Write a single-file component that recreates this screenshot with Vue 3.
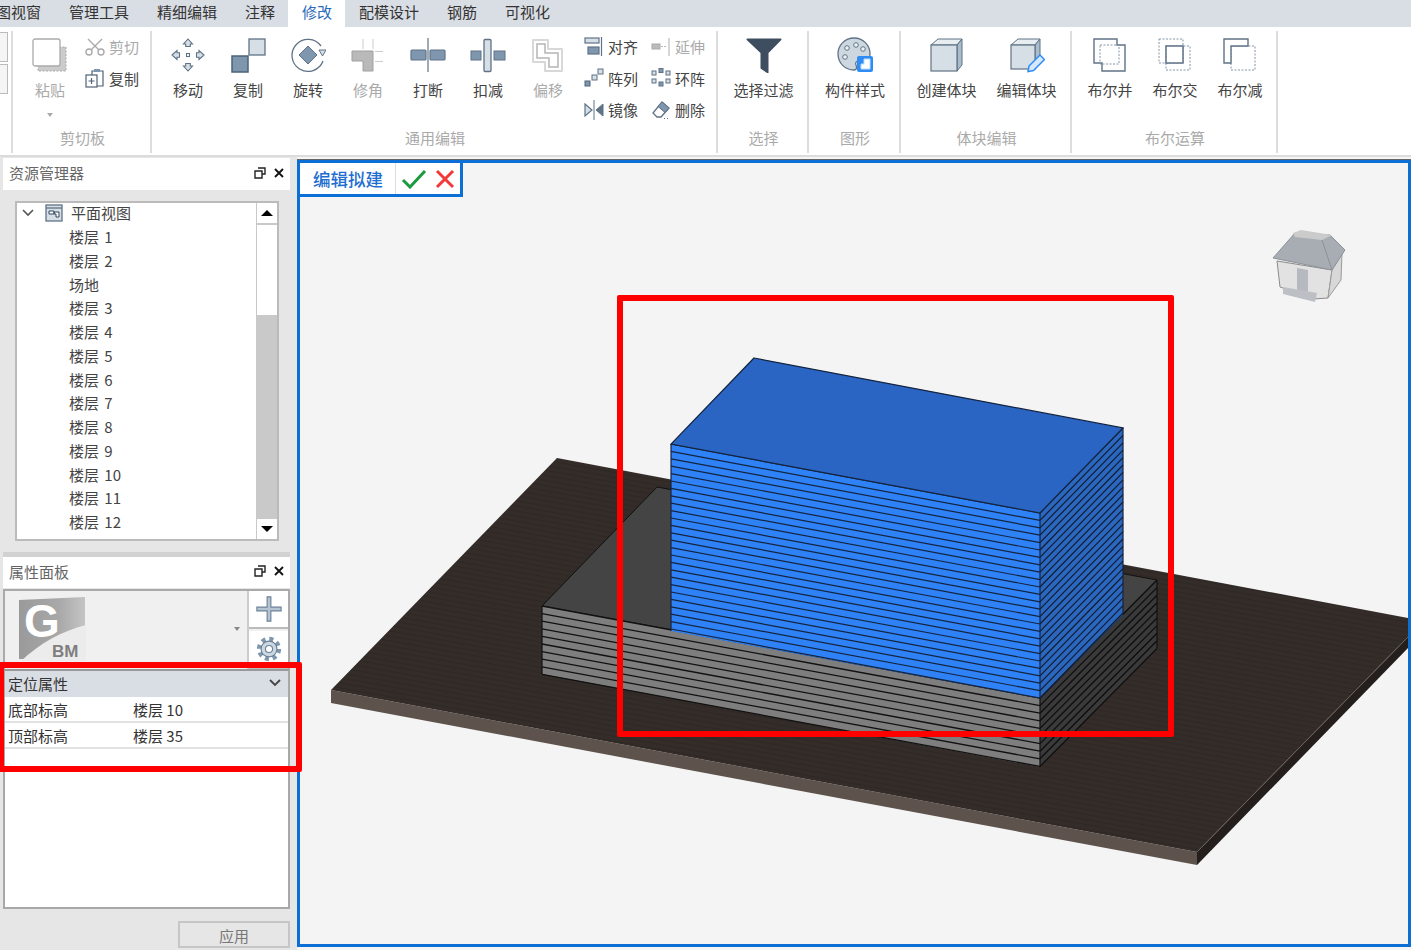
<template>
  <div class="app">
    <div class="tabs">
      <div v-for="t in tabs" :key="t" class="tab" :class="{ active: t === '修改' }">{{ t }}</div>
    </div>

    <div class="ribbon">
      <div class="stub"><i></i><i></i></div>

      <section class="group clip">
        <div class="tools">
          <div class="paste off">
            <svg class="icon" viewBox="0 0 36 36" v-html="icons.paste"></svg>
            <span class="label">粘贴</span>
            <b class="caret"></b>
          </div>
          <div class="small-col">
            <div class="small off">
              <svg viewBox="0 0 20 20" v-html="icons.cut"></svg><span>剪切</span>
            </div>
            <div class="small">
              <svg viewBox="0 0 20 20" v-html="icons.copySmall"></svg><span>复制</span>
            </div>
          </div>
        </div>
        <div class="group-label">剪切板</div>
      </section>

      <section class="group edit">
        <div class="tools">
          <div v-for="t in editTools" :key="t.name" class="tool w60" :class="{ off: t.off }">
            <svg class="icon" viewBox="0 0 36 36" v-html="icons[t.icon]"></svg>
            <span class="label">{{ t.name }}</span>
          </div>
          <div class="small-grid">
            <div v-for="t in smallTools" :key="t.name" class="small" :class="{ off: t.off }">
              <svg viewBox="0 0 20 20" v-html="icons[t.icon]"></svg><span>{{ t.name }}</span>
            </div>
          </div>
        </div>
        <div class="group-label">通用编辑</div>
      </section>

      <section class="group sel">
        <div class="tools center">
          <div class="tool w60">
            <svg class="icon" viewBox="0 0 36 36" v-html="icons.filter"></svg>
            <span class="label">选择过滤</span>
          </div>
        </div>
        <div class="group-label">选择</div>
      </section>

      <section class="group shape">
        <div class="tools center">
          <div class="tool w60">
            <svg class="icon" viewBox="0 0 36 36" v-html="icons.palette"></svg>
            <span class="label">构件样式</span>
          </div>
        </div>
        <div class="group-label">图形</div>
      </section>

      <section class="group block">
        <div class="tools center">
          <div class="tool w80">
            <svg class="icon" viewBox="0 0 36 36" v-html="icons.cube"></svg>
            <span class="label">创建体块</span>
          </div>
          <div class="tool w80">
            <svg class="icon" viewBox="0 0 36 36" v-html="icons.cubeEdit"></svg>
            <span class="label">编辑体块</span>
          </div>
        </div>
        <div class="group-label">体块编辑</div>
      </section>

      <section class="group bool">
        <div class="tools center">
          <div v-for="t in boolTools" :key="t.name" class="tool w65">
            <svg class="icon" viewBox="0 0 36 36" v-html="icons[t.icon]"></svg>
            <span class="label">{{ t.name }}</span>
          </div>
        </div>
        <div class="group-label">布尔运算</div>
      </section>
    </div>

    <div class="workspace">
      <aside class="side">
        <div class="panel-head first">
          <span>资源管理器</span>
          <div class="head-btns">
            <svg viewBox="0 0 12 12" v-html="icons.restore"></svg>
            <svg viewBox="0 0 12 12" v-html="icons.close"></svg>
          </div>
        </div>
        <div class="tree-wrap">
          <div class="tree">
            <div class="tree-list">
              <div class="tree-root">
                <svg class="chev" viewBox="0 0 12 8"><path d="M1 1l5 5 5-5" fill="none" stroke="#555" stroke-width="1.6" /></svg>
                <svg class="view-ico" viewBox="0 0 18 18" v-html="icons.planView"></svg>
                <span>平面视图</span>
              </div>
              <div v-for="f in floors" :key="f" class="tree-row">{{ f }}</div>
            </div>
            <div class="scroll">
              <div class="sc-btn"><b class="up"></b></div>
              <div class="sc-thumb"></div>
              <div class="sc-track"></div>
              <div class="sc-btn"><b class="down"></b></div>
            </div>
          </div>
        </div>
        <div class="divider"></div>

        <div class="panel-head">
          <span>属性面板</span>
          <div class="head-btns">
            <svg viewBox="0 0 12 12" v-html="icons.restore"></svg>
            <svg viewBox="0 0 12 12" v-html="icons.close"></svg>
          </div>
        </div>
        <div class="selector">
          <div class="type-box">
            <svg class="logo" viewBox="0 0 68 66">
              <defs>
                <linearGradient id="logoFill" x1="0" y1="0" x2="1" y2="0">
                  <stop offset="0" stop-color="#9a9a9a" />
                  <stop offset="0.6" stop-color="#a8a8a8" />
                  <stop offset="1" stop-color="#c4c4c4" />
                </linearGradient>
              </defs>
              <path d="M1 5L67 2V64H1z" fill="url(#logoFill)" />
              <path d="M3 66C22 48 44 36 68 30V66z" fill="#ececec" />
              <text x="6" y="42" class="logo-g">G</text>
              <text x="34" y="62" class="logo-bm">BM</text>
            </svg>
            <b class="caret"></b>
          </div>
          <div class="type-btns">
            <div class="type-btn">
              <svg viewBox="0 0 30 30"><path d="M13 2h4v11h11v4H17v11h-4V17H2v-4h11z" fill="#b4c4d3" stroke="#6b8096" stroke-width="1.2" /></svg>
            </div>
            <div class="type-btn">
              <svg viewBox="0 0 30 30" v-html="icons.gear"></svg>
            </div>
          </div>
        </div>
        <div class="props">
          <div class="props-head">
            <span>定位属性</span>
            <svg viewBox="0 0 12 8"><path d="M1 1l5 5 5-5" fill="none" stroke="#444" stroke-width="1.8" /></svg>
          </div>
          <div v-for="p in props" :key="p.k" class="prop-row">
            <span class="prop-k">{{ p.k }}</span>
            <span>{{ p.v }}</span>
          </div>
        </div>
        <div class="apply-row">
          <div class="apply">应用</div>
        </div>
      </aside>

      <main class="viewport">
        <svg class="scene" viewBox="300 163 1108 781">
          <defs>
            <pattern id="grain" width="14" height="5" patternUnits="userSpaceOnUse" patternTransform="rotate(10)">
              <rect width="14" height="5" fill="#332c29" />
              <rect y="3" width="14" height="1" fill="#2e2825" />
            </pattern>
          </defs>

          <!-- site plate -->
          <polygon points="331,690 1197,852 1197,865 331,703" fill="#5d524c" />
          <polygon points="1197,852 1408,637 1408,648 1197,865" fill="#241f1c" />
          <polygon points="557,458 1408,618 1408,637 1197,852 331,690" fill="url(#grain)" />
          <line x1="1197" y1="852" x2="1408" y2="637" stroke="#6a645f" stroke-width="1" />

          <!-- podium floors -->
          <polygon points="542,606 657,487 1157,580 1040,698" fill="#444" stroke="#111" stroke-width="1" />
          <polygon points="542,606 1040,698 1040,767 542,674" fill="#7e7e7e" />
          <polygon points="1040,698 1157,580 1157,648 1040,767" fill="#3a3a3a" />
          <line v-for="(l, i) in podiumFront" :key="'pf' + i" v-bind="l" stroke="#111" stroke-width="1.3" />
          <line v-for="(l, i) in podiumSide" :key="'ps' + i" v-bind="l" stroke="#0d0d0d" stroke-width="1.3" />
          <path d="M542 606V674M1040 698V767M1157 580V648" stroke="#111" stroke-width="1.2" />

          <!-- selected tower -->
          <polygon points="671,444 1040,513 1040,698 671,631" fill="#2f82f6" />
          <polygon points="1040,513 1123,428 1123,615 1040,698" fill="#2b67bf" />
          <line v-for="(l, i) in towerFront" :key="'tf' + i" v-bind="l" stroke="#14243f" stroke-width="1.2" />
          <line v-for="(l, i) in towerSide" :key="'ts' + i" v-bind="l" stroke="#101c30" stroke-width="1.2" />
          <polygon points="754,358 1123,428 1040,513 671,444" fill="#2a65c4" stroke="#14243f" stroke-width="1.2" />
          <path d="M671 444V631M1040 513V698M1123 428V615" stroke="#14243f" stroke-width="1.2" />

          <!-- view cube -->
          <g stroke-linejoin="round">
            <polygon points="1277,261 1332,270 1328,298 1313,299 1280,287" fill="#e2e2e2" stroke="#8b8b8b" />
            <polygon points="1332,270 1342,253 1341,280 1328,298" fill="#d8d8d8" stroke="#9a9a9a" />
            <polygon points="1297,268 1308,270 1308,293 1297,290" fill="#b6bac0" />
            <polygon points="1283,287 1317,293 1315,302 1283,294" fill="#bcc0c4" />
            <polygon points="1273,258 1295,233 1330,235 1345,250 1332,270" fill="#a8adb3" stroke="#8d9197" />
            <path d="M1322 240L1332 270" stroke="#8d9197" fill="none" />
            <polygon points="1293,233 1301,230 1332,235 1322,240 1295,237" fill="#cbcbcb" />
          </g>
        </svg>

        <div class="edit-bar">
          <span class="edit-title">编辑拟建</span>
          <div class="edit-acts">
            <svg viewBox="0 0 26 20"><path d="M2 11l7 7L24 2" fill="none" stroke="#1c9a3e" stroke-width="3" /></svg>
            <svg viewBox="0 0 20 20"><path d="M2 2l16 16M18 2L2 18" fill="none" stroke="#f03a3a" stroke-width="3" /></svg>
          </div>
        </div>
      </main>
    </div>

    <!-- red annotations on the screenshot -->
    <div class="mark mark-model"></div>
    <div class="mark mark-props"></div>
  </div>
</template>

<script setup>
const S = '#5f7286'
const F = '#7f97ae'
const L = '#d6dfe6'
const DASH = '#8496a8'

const tabs = ['图视窗', '管理工具', '精细编辑', '注释', '修改', '配模设计', '钢筋', '可视化']

const editTools = [
  { name: '移动', icon: 'move' },
  { name: '复制', icon: 'copy' },
  { name: '旋转', icon: 'rotate' },
  { name: '修角', icon: 'trim', off: true },
  { name: '打断', icon: 'split' },
  { name: '扣减', icon: 'subtract' },
  { name: '偏移', icon: 'offset', off: true }
]

const smallTools = [
  { name: '对齐', icon: 'align' },
  { name: '延伸', icon: 'extend', off: true },
  { name: '阵列', icon: 'array' },
  { name: '环阵', icon: 'ring' },
  { name: '镜像', icon: 'mirror' },
  { name: '删除', icon: 'erase' }
]

const boolTools = [
  { name: '布尔并', icon: 'boolUnion' },
  { name: '布尔交', icon: 'boolCross' },
  { name: '布尔减', icon: 'boolMinus' }
]

const floors = ['楼层 1', '楼层 2', '场地']
for (let i = 3; i <= 12; i++) floors.push('楼层 ' + i)

const props = [
  { k: '底部标高', v: '楼层 10' },
  { k: '顶部标高', v: '楼层 35' }
]

// floor lines of the two volumes, one per storey
function floorLines(x1, y1, x2, y2, step, count) {
  const out = []
  for (let i = 0; i <= count; i++) {
    out.push({ x1, y1: y1 + i * step, x2, y2: y2 + i * step })
  }
  return out
}

const podiumFront = floorLines(542, 606, 1040, 698, 7.6, 9)
const podiumSide = floorLines(1040, 698, 1157, 580, 7.6, 9)
const towerFront = floorLines(671, 444, 1040, 513, 7.4, 25)
const towerSide = floorLines(1040, 513, 1123, 428, 7.4, 25)

const arrow = 'M18 2l4.5 5h-2.2v2.5h-4.6V7h-2.2z'

const icons = {
  paste: `<path d="M6 10h28v24H6z" fill="#ccc" stroke="#aaa" stroke-dasharray="2 1.5"/><rect x="1" y="2" width="27" height="27" rx="2" fill="#fff" stroke="#aaa" stroke-width="1.3"/>`,
  move: `<g fill="${L}" stroke="${S}" stroke-width="1.1"><path d="${arrow}"/><path d="${arrow}" transform="rotate(90 18 18)"/><path d="${arrow}" transform="rotate(180 18 18)"/><path d="${arrow}" transform="rotate(270 18 18)"/><rect x="16.5" y="16.5" width="3" height="3" fill="#fff"/></g>`,
  copy: `<rect x="19" y="2" width="16" height="16" fill="${L}" stroke="${S}" stroke-width="1.3"/><rect x="2" y="19" width="16" height="16" fill="${F}" stroke="#4f6276" stroke-width="1.5"/>`,
  rotate: `<path d="M31 9A16 16 0 1 0 33 24" fill="none" stroke="${S}" stroke-width="1.3"/><path d="M18 9l9 9-9 9-9-9z" fill="${F}" stroke="${S}"/><path d="M29 13h7l-3.500 6z" fill="${L}" stroke="${S}"/>`,
  trim: `<path d="M2 14H23V34H13V24H2z" fill="#b9b9b9" stroke="#a0a0a0"/><path d="M13 2v10M23 2v10M25 14.500h8M25 24.500h8" stroke="#ccc" fill="none"/>`,
  split: `<path d="M18 1v34" stroke="${S}" stroke-width="1.2"/><rect x="1" y="13" width="15" height="10" rx="1" fill="${F}" stroke="${S}" stroke-width="1.2"/><rect x="20" y="13" width="15" height="10" rx="1" fill="${F}" stroke="${S}" stroke-width="1.2"/>`,
  subtract: `<rect x="1" y="14" width="10" height="9" fill="${F}" stroke="${S}"/><rect x="24" y="14" width="11" height="9" fill="${F}" stroke="${S}"/><rect x="14" y="2.500" width="7" height="32" rx="1" fill="${L}" stroke="${S}" stroke-width="1.3"/>`,
  offset: `<path d="M3 3h15v9h14v22H15v-9H3z" fill="#fff" stroke="#d8d8d8" stroke-width="2" stroke-linejoin="round"/><path d="M7 7h8v9h13v14H19v-9H7z" fill="none" stroke="#b5b5b5" stroke-width="1.5"/>`,
  cut: `<g fill="none" stroke="#aaa" stroke-width="1.4"><circle cx="4" cy="15" r="3"/><circle cx="16" cy="15" r="3"/><path d="M3 2l11 11M17 2L6 13"/></g>`,
  copySmall: `<path d="M7 3h11v15H7z" fill="#fff" stroke="#4f6276" stroke-width="1.2"/><rect x="9" y="1" width="6" height="3" fill="${F}"/><rect x="1" y="7" width="11" height="12" fill="#fff" stroke="#4f6276" stroke-width="1.2"/><path d="M6.500 10v6M3.500 13h6" stroke="#4f6276" stroke-width="1.2"/>`,
  align: `<rect x="1" y="1" width="14" height="5" fill="${L}" stroke="${S}" stroke-width="1.2"/><rect x="4" y="10" width="11" height="7" fill="${F}" stroke="${S}" stroke-width="1.2"/><path d="M17.500 0v19" stroke="${S}" stroke-width="1.2"/>`,
  extend: `<rect x="1" y="7" width="8" height="5" fill="#bbb" stroke="#aaa"/><path d="M10 9.500h6" stroke="#bbb" stroke-dasharray="2 1"/><path d="M18 1v18" stroke="#bbb" stroke-width="1.2"/>`,
  array: `<rect x="1" y="13" width="5" height="5" fill="${F}" stroke="#4f6276"/><rect x="8" y="7" width="5" height="5" fill="${L}" stroke="${S}"/><rect x="14" y="1" width="5" height="5" fill="${L}" stroke="${S}"/>`,
  ring: `<g stroke="${S}" fill="${L}"><rect x="1" y="3" width="4" height="4"/><rect x="8" y="0.500" width="4" height="4" fill="${F}"/><rect x="15" y="3" width="4" height="4"/><rect x="1" y="11" width="4" height="4"/><rect x="8" y="14" width="4" height="4" fill="${F}"/><rect x="15" y="11" width="4" height="4"/></g>`,
  mirror: `<path d="M1 4l7 6-7 6z" fill="${L}" stroke="${S}" stroke-width="1.2"/><path d="M19 4l-7 6 7 6z" fill="${S}" stroke="${S}"/><path d="M10 0v20" stroke="${S}" stroke-width="1"/>`,
  erase: `<path d="M11 2l7 6-8 9H6l-4-4z" fill="#fff" stroke="${S}" stroke-width="1.3"/><path d="M11 2l7 6-4 4.500-7-6z" fill="${F}" stroke="${S}"/><path d="M13 18.500h1M16 18.500h1" stroke="${S}"/>`,
  filter: `<path d="M1.500 1.500h33a1 1 0 0 1 .8 1.600L22.500 16V37l-8-5.500V16L.7 3.100a1 1 0 0 1 .8-1.600z" fill="#3f4d61"/>`,
  palette: `<path d="M17 1C8 1 1 8 1 17s7 16 16 16c3 0 3-3 2-5s0-4 3-4h6c3 0 5-2 5-7C33 8 26 1 17 1z" fill="#cdd7df" stroke="${S}" stroke-width="1.3"/><g fill="#eef2f5" stroke="${S}"><circle cx="10" cy="11" r="2.300"/><circle cx="19" cy="8" r="2.300"/><circle cx="8" cy="20" r="2.300"/><circle cx="26" cy="12" r="2.300"/></g><rect x="20" y="19" width="16" height="16" rx="2" fill="#2f8cf5"/><path d="M27 22h6v10h-9v-5h3z" fill="#fff" stroke="#bcdcff"/>`,
  cube: `<path d="M2 8L9 2H33L28 8z" fill="#e8edf1" stroke="${S}"/><path d="M28 8L33 2V28L28 34z" fill="#a9bccb" stroke="${S}"/><rect x="2" y="8" width="26" height="26" fill="${L}" stroke="${S}" stroke-width="1.2"/>`,
  cubeEdit: `<path d="M2 8L9 2H31L26 8z" fill="#e8edf1" stroke="${S}"/><path d="M26 8L31 2V26L26 32z" fill="#a9bccb" stroke="${S}"/><rect x="2" y="8" width="24" height="24" fill="${L}" stroke="${S}" stroke-width="1.2"/><path d="M20 29l11-11 4.500 4.500-11 11-5.500 1z" fill="#d5e8fd" stroke="#2f8cf5" stroke-width="1.5"/>`,
  boolUnion: `<path d="M2 2H25V8H33V34H10V26H2z" fill="#fff" stroke="${S}" stroke-width="1.4"/><rect x="8" y="8" width="19" height="19" fill="none" stroke="${DASH}" stroke-dasharray="2 1.500"/>`,
  boolCross: `<rect x="2" y="2" width="24" height="24" fill="none" stroke="${DASH}" stroke-dasharray="2 1.500"/><rect x="9" y="9" width="24" height="24" fill="none" stroke="${DASH}" stroke-dasharray="2 1.500"/><rect x="9" y="9" width="17" height="17" fill="#fff" stroke="${S}" stroke-width="1.5"/>`,
  boolMinus: `<rect x="9" y="9" width="24" height="24" fill="none" stroke="${DASH}" stroke-dasharray="2 1.500"/><path d="M26 9V2H2V26H9V9z" fill="#fff" stroke="${S}" stroke-width="1.4"/>`,
  restore: `<path d="M4 1h7v6H8M1 4h7v7H1z" fill="none" stroke="#222" stroke-width="1.4"/>`,
  close: `<path d="M2 2l8 8M10 2l-8 8" fill="none" stroke="#111" stroke-width="1.8"/>`,
  planView: `<rect x="1" y="1" width="16" height="16" fill="${L}" stroke="${S}" stroke-width="1.300"/><path d="M1 4h16" stroke="${S}" stroke-width="1.300"/><path d="M4 7h5v3H4zM9 8h5v5h-3v-3H9z" fill="#fff" stroke="#33475c"/>`,
  gear: `<circle cx="15" cy="15" r="10.500" fill="none" stroke="#7f97ae" stroke-width="5" stroke-dasharray="4.200 4.050"/><circle cx="15" cy="15" r="8.500" fill="#cbd7e1" stroke="#6b8096" stroke-width="1.2"/><circle cx="15" cy="15" r="3.800" fill="#fff" stroke="#6b8096" stroke-width="1.2"/>`
}
</script>

<style scoped>
.app {
  position: relative;
  width: 1411px;
  height: 950px;
  overflow: hidden;
  background: #f5f5f5;
  color: #444;
  font-family: "Noto Sans CJK SC", "Noto Sans", sans-serif;
  font-size: 15px;
}

.tabs {
  display: flex;
  height: 27px;
  margin-left: -18px;
  background: #d9dde4;
}
.tab {
  padding: 0 14px;
  line-height: 23px;
  color: #333;
}
.tab.active {
  background: #fff;
  color: #2a6bb8;
  margin-left: -1px;
  padding-right: 13px;
}

.ribbon {
  display: flex;
  height: 130px;
  padding-top: 4px;
  box-sizing: border-box;
  background: #fff;
  border-bottom: 2px solid #dcdcdc;
}
.stub {
  width: 13px;
  height: 122px;
  box-sizing: border-box;
  border-right: 2px solid #ddd;
  padding-top: 1px;
}
.stub i {
  display: block;
  width: 8px;
  height: 30px;
  margin-bottom: 2px;
  border: 1px solid #bbb;
  border-left: 0;
  box-sizing: border-box;
  background: #f5f5f5;
}

.group {
  display: flex;
  flex-direction: column;
  height: 122px;
  padding-left: 2px;
  box-sizing: border-box;
  border-right: 2px solid #ddd;
}
.clip { width: 139px; }
.edit { width: 566px; }
.sel { width: 91px; }
.shape { width: 92px; }
.block { width: 171px; }
.bool { width: 206px; }

.tools {
  display: flex;
  padding-top: 6px;
}
.tools.center { justify-content: center; }
.edit .tools { padding-left: 4px; }
.group-label {
  margin-top: auto;
  margin-bottom: 5px;
  text-align: center;
  line-height: 20px;
  color: #aaa;
}

.tool {
  display: flex;
  flex-direction: column;
  align-items: center;
  flex: none;
}
.w60 { width: 60px; }
.w65 { width: 65px; }
.w80 { width: 80px; }
.icon {
  width: 36px;
  height: 36px;
  display: block;
}
.label {
  margin-top: 7px;
  line-height: 20px;
  white-space: nowrap;
}
.off, .off .label { color: #aaa; }

.paste {
  display: flex;
  flex-direction: column;
  align-items: center;
  width: 36px;
  margin-left: 17px;
  margin-right: 16px;
}
.caret {
  display: block;
  width: 0;
  height: 0;
  border: 3px solid transparent;
  border-top: 4px solid #aaa;
  border-bottom: 0;
}
.paste .caret { margin-top: 13px; }

.small-col {
  display: flex;
  flex-direction: column;
  margin: -6px 0 0 1px;
}
.small-grid {
  display: grid;
  grid-template-columns: 67px 67px;
  grid-auto-rows: 31.5px;
  margin: -6px 0 0 6px;
}
.small {
  display: flex;
  align-items: center;
  height: 31.5px;
  white-space: nowrap;
}
.small svg {
  width: 20px;
  height: 20px;
  flex: none;
  margin-right: 4px;
}

.workspace {
  display: flex;
  height: 793px;
}

.side {
  display: flex;
  flex-direction: column;
  flex: none;
  width: 297px;
  box-sizing: border-box;
  padding: 1px 7px 0 3px;
  background: #e6e6e6;
}
.panel-head {
  display: flex;
  align-items: center;
  justify-content: space-between;
  height: 31px;
  padding: 0 5px 3px 6px;
  box-sizing: border-box;
  flex: none;
  background: #fff;
  color: #666;
}
.panel-head.first { height: 32px; }
.head-btns {
  display: flex;
  gap: 7px;
}
.head-btns svg {
  width: 12px;
  height: 12px;
}

.tree-wrap {
  padding: 11px 11px 11px 12px;
  flex: none;
}
.tree {
  display: flex;
  height: 340px;
  box-sizing: border-box;
  border: 2px solid #bbb;
  background: #fff;
}
.tree-list {
  flex: 1;
  overflow: hidden;
}
.tree-root {
  display: flex;
  align-items: center;
  height: 22px;
  padding-bottom: 3px;
  box-sizing: border-box;
}
.chev {
  width: 12px;
  height: 8px;
  margin-left: 5px;
}
.view-ico {
  width: 18px;
  height: 18px;
  margin-left: 11px;
  margin-right: 8px;
}
.tree-row {
  height: 23.75px;
  line-height: 23.75px;
  padding-left: 52px;
  word-spacing: 2px;
}

.scroll {
  display: flex;
  flex-direction: column;
  flex: none;
  width: 21px;
  border-left: 1px solid #c9c9c9;
  box-sizing: border-box;
  background: #c9c9c9;
}
.sc-btn {
  display: flex;
  align-items: center;
  justify-content: center;
  height: 20px;
  background: #fff;
}
.sc-btn .up, .sc-btn .down {
  width: 0;
  height: 0;
  border-left: 6px solid transparent;
  border-right: 6px solid transparent;
}
.sc-btn .up { border-bottom: 6px solid #000; }
.sc-btn .down { border-top: 6px solid #000; }
.sc-thumb {
  height: 90px;
  margin-top: 2px;
  background: #fff;
}
.sc-track { flex: 1; }

.divider {
  height: 5px;
  flex: none;
  background: #d2d2d2;
}

.selector {
  display: flex;
  height: 80px;
  margin-top: 1px;
  overflow: hidden;
  flex: none;
  border: 2px solid #aaa;
  border-bottom: 0;
  box-sizing: border-box;
  background: #f0f0f0;
}
.type-box {
  position: relative;
  flex: 1;
  padding: 4px 0 0 13px;
}
.logo {
  width: 68px;
  height: 66px;
  display: block;
}
.logo-g {
  font: bold 46px "Liberation Sans", sans-serif;
  fill: #fff;
}
.logo-bm {
  font: bold 17px "Liberation Sans", sans-serif;
  fill: #7f7f7f;
}
.type-box .caret {
  position: absolute;
  right: 7px;
  top: 36px;
  border-top-color: #888;
}
.type-btns {
  flex: none;
  width: 41px;
  border-left: 2px solid #ccc;
  box-sizing: border-box;
}
.type-btn {
  display: flex;
  align-items: center;
  justify-content: center;
  height: 38px;
  margin-bottom: 2px;
  background: #fff;
  border-bottom: 2px solid #bbb;
  box-sizing: border-box;
}
.type-btn svg {
  width: 28px;
  height: 28px;
}

.props {
  height: 240px;
  box-sizing: border-box;
  flex: none;
  border: 2px solid #a8a8a8;
  border-top-color: #999;
  background: #fff;
  color: #333;
}
.props-head {
  display: flex;
  align-items: center;
  justify-content: space-between;
  height: 26px;
  padding: 0 7px 2px 3px;
  box-sizing: border-box;
  background: #d9dde4;
}
.props-head svg {
  width: 12px;
  height: 8px;
}
.prop-row {
  display: flex;
  align-items: center;
  height: 26px;
  padding-left: 3px;
  border-bottom: 2px solid #e2e2e2;
  box-sizing: border-box;
}
.prop-k { width: 125px; }

.apply-row {
  display: flex;
  justify-content: flex-end;
  padding-top: 12px;
}
.apply {
  width: 112px;
  height: 27px;
  line-height: 25px;
  box-sizing: border-box;
  text-align: center;
  border: 2px solid #c6c6c6;
  color: #777;
}

.viewport {
  position: relative;
  flex: none;
  width: 1114px;
  height: 787px;
  margin-top: 3px;
  box-sizing: border-box;
  border: 3px solid #0b6fd6;
  box-shadow: 0 -1px 0 #666;
  background: #f4f4f4;
}
.scene {
  display: block;
  width: 1108px;
  height: 781px;
}

.edit-bar {
  position: absolute;
  left: 0;
  top: 0;
  display: flex;
  align-items: center;
  width: 163px;
  height: 34px;
  box-sizing: border-box;
  border: solid #0b6fd6;
  border-width: 0 3px 3px 0;
  background: #fff;
}
.edit-title {
  width: 96px;
  padding-left: 13px;
  box-sizing: border-box;
  color: #1f6fd0;
  font-size: 17.5px;
  font-weight: 500;
  line-height: 31px;
  white-space: nowrap;
  border-right: 1px solid #ddd;
}
.edit-acts {
  display: flex;
  align-items: center;
  gap: 8px;
  padding-left: 5px;
}
.edit-acts svg:first-child {
  width: 26px;
  height: 20px;
}
.edit-acts svg:last-child {
  width: 20px;
  height: 20px;
}

.mark {
  position: absolute;
  box-sizing: border-box;
  border: 6px solid #f00;
  border-radius: 2px;
  pointer-events: none;
}
.mark-model {
  left: 617px;
  top: 295px;
  width: 557px;
  height: 442px;
}
.mark-props {
  left: -2px;
  top: 662px;
  width: 304px;
  height: 110px;
}
</style>

<style>
html, body { background: #f5f5f5; }
</style>
